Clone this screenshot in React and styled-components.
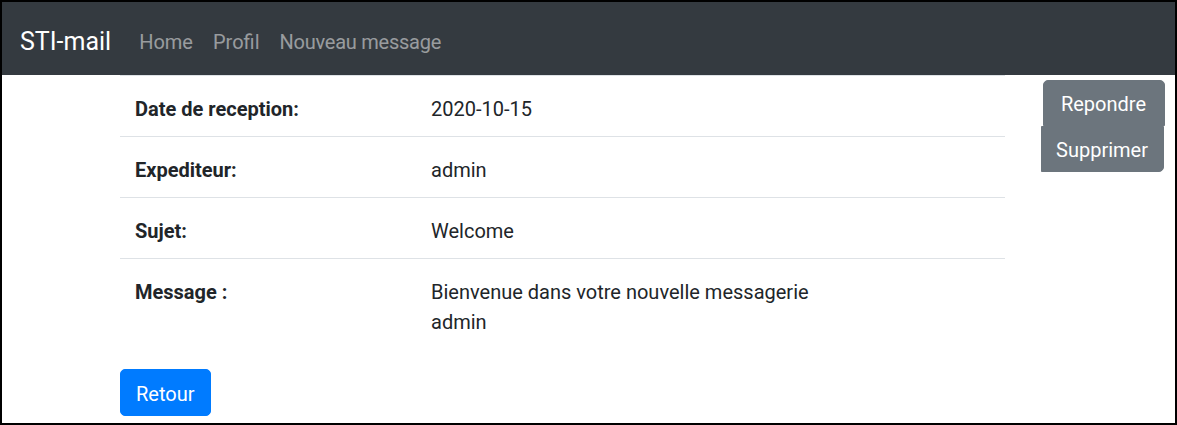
import React from 'react';
import styled, { createGlobalStyle } from 'styled-components';

const GlobalStyle = createGlobalStyle`
    html, body {
        margin: 0;
        padding: 0;
        background: #FFFFFF;
    }
    body {
        font-family: "Segoe UI", Roboto, "Noto Sans", "Liberation Sans", sans-serif;
        font-size: 20px;
        line-height: 30px;
        color: #212529;
    }
    * {
        box-sizing: border-box;
    }
`

const Frame = styled.div`
    width: 1177px;
    height: 425px;
    border: 2px solid #000000;
    overflow: hidden;
    display: flex;
    flex-direction: column;
`

const Navbar = styled.nav`
    display: flex;
    align-items: center;
    height: 73px;
    padding: 6px 20px 0 18px;
    background: #343a40;
`

const Brand = styled.a`
    font-size: 25px;
    line-height: 37px;
    color: #FFFFFF;
    margin-right: 18px;
    text-decoration: none;
`

const NavLink = styled.a`
    padding: 0 10px;
    color: rgba(255, 255, 255, 0.5);
    text-decoration: none;
    letter-spacing: ${props => props.tight ? "-0.25px" : "0"};
`

const Body = styled.div`
    display: flex;
    justify-content: space-between;
    align-items: flex-start;
    padding: 0 10px 0 118px;
`

const Main = styled.main`
    width: 885px;
`

const Table = styled.table`
    width: 100%;
    border-collapse: collapse;
    margin-bottom: 20px;
`

const Cell = styled.td`
    padding: 18px 15px 12px;
    border-top: 1px solid #dee2e6;
    vertical-align: top;
    font-weight: ${props => props.label ? 700 : 400};
    width: ${props => props.label ? "296px" : "auto"};
`

const Button = styled.button`
    display: block;
    font-family: inherit;
    font-size: 20px;
    line-height: 30px;
    padding: 9px 15px 6px;
    border: 1px solid ${props => props.primary ? "#007bff" : "#6c757d"};
    background: ${props => props.primary ? "#007bff" : "#6c757d"};
    color: #FFFFFF;
    border-radius: 5px;
    cursor: pointer;
`

const Actions = styled.aside`
    display: flex;
    flex-direction: column;
    align-items: flex-end;
    margin-top: 5px;
`

const TopButton = styled(Button)`
    padding: 8px 18px 6px 17px;
    border-bottom-left-radius: 0;
    border-bottom-right-radius: 0;
`

const BottomButton = styled(Button)`
    padding: 8px 15px 6px 14px;
    border-top-left-radius: 0;
    border-top-right-radius: 0;
    border-bottom-left-radius: 0;
    margin-right: 1px;
`

const rows = [
    { label: "Date de reception:", value: ["2020-10-15"] },
    { label: "Expediteur:", value: ["admin"] },
    { label: "Sujet:", value: ["Welcome"] },
    { label: "Message :", value: ["Bienvenue dans votre nouvelle messagerie", "admin"] },
];

function App() {
    return (
        <Frame>
            <GlobalStyle />
            <Navbar>
                <Brand href="#">STI-mail</Brand>
                <NavLink href="#">Home</NavLink>
                <NavLink href="#">Profil</NavLink>
                <NavLink href="#" tight>Nouveau message</NavLink>
            </Navbar>

            <Body>
                <Main>
                    <Table>
                        <tbody>
                            {rows.map(row => (
                                <tr key={row.label}>
                                    <Cell label>{row.label}</Cell>
                                    <Cell>
                                        {row.value.map(line => <div key={line}>{line}</div>)}
                                    </Cell>
                                </tr>
                            ))}
                        </tbody>
                    </Table>
                    <Button primary>Retour</Button>
                </Main>

                <Actions>
                    <TopButton>Repondre</TopButton>
                    <BottomButton>Supprimer</BottomButton>
                </Actions>
            </Body>
        </Frame>
    );
}

export default App;
